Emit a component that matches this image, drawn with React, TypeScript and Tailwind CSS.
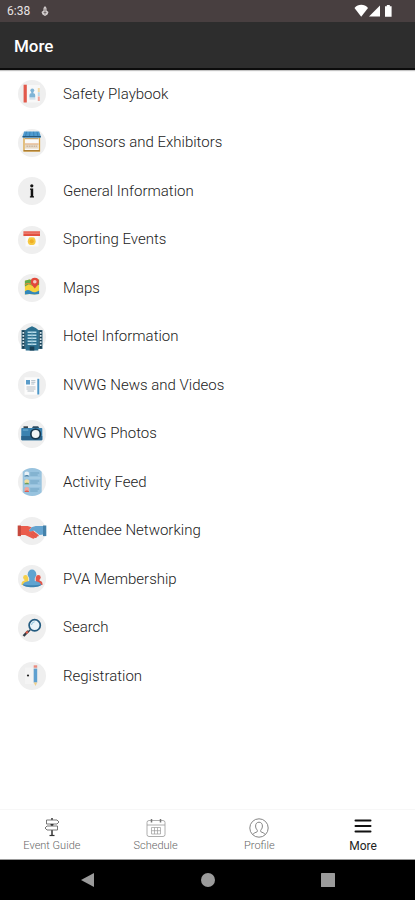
import React from 'react';

const menuItems = [
  { label: 'Safety Playbook', icon: <PlaybookIcon /> },
  { label: 'Sponsors and Exhibitors', icon: <StoreIcon /> },
  { label: 'General Information', icon: <InfoIcon /> },
  { label: 'Sporting Events', icon: <MedalIcon /> },
  { label: 'Maps', icon: <MapIcon /> },
  { label: 'Hotel Information', icon: <HotelIcon /> },
  { label: 'NVWG News and Videos', icon: <NewsIcon /> },
  { label: 'NVWG Photos', icon: <CameraIcon /> },
  { label: 'Activity Feed', icon: <FeedIcon /> },
  { label: 'Attendee Networking', icon: <HandshakeIcon /> },
  { label: 'PVA Membership', icon: <MembersIcon /> },
  { label: 'Search', icon: <MagnifierIcon /> },
  { label: 'Registration', icon: <PencilIcon /> },
];

const tabs = [
  { label: 'Event Guide', icon: <SignpostIcon />, active: false },
  { label: 'Schedule', icon: <CalendarIcon />, active: false },
  { label: 'Profile', icon: <ProfileIcon />, active: false },
  { label: 'More', icon: <BarsIcon />, active: true },
];

// Grey disc shared by all the menu icons
function Disc({ children }: { children: React.ReactNode }) {
  return (
    <svg viewBox="0 0 28 28" className="w-7 h-7 shrink-0 overflow-visible" aria-hidden="true">
      <circle cx="14" cy="14" r="14" fill="#efefef" />
      {children}
    </svg>
  );
}

function PlaybookIcon() {
  return (
    <Disc>
      <rect x="8" y="5" width="14" height="17.5" fill="#f8f8f8" />
      <rect x="5.6" y="4.7" width="3.2" height="17.8" fill="#e2594b" />
      <circle cx="14.3" cy="10.3" r="1.9" fill="#7fb4d6" />
      <path d="M13.2 11h2.2v2.5h-2.2z" fill="#7fb4d6" />
      <path d="M11.4 17.5v-2c0-1.6 1.2-2.4 2.9-2.4s2.9.8 2.9 2.4v2z" fill="#7fb4d6" />
      <path d="M11.4 18.9h6" stroke="#a9cbe0" strokeWidth="0.8" />
      <rect x="19.8" y="8" width="2" height="4" fill="#f3d9a6" />
      <rect x="19.8" y="12.2" width="2" height="4" fill="#bcd9e8" />
      <rect x="19.8" y="16.5" width="2" height="4.5" fill="#f0a79d" />
    </Disc>
  );
}

function StoreIcon() {
  return (
    <Disc>
      <rect x="6" y="7.5" width="15.5" height="14.5" fill="#fafafa" stroke="#d9a441" strokeWidth="1.3" />
      <path d="M6.2 2.6h15l1.6 4.6v1.6H4.6V7.2z" fill="#4f9bd0" />
      <path d="M4.6 7.6h18.2" stroke="#24597f" strokeWidth="1.2" />
      <path d="M8.5 2.8 7.6 7M12 2.8 11.6 7M15.6 2.8l.3 4.2M19 2.8l.9 4.2" stroke="#2f78ab" strokeWidth="0.7" />
      <path d="M7 9.7h13.5" stroke="#b98f4b" strokeWidth="1" />
      <rect x="7" y="15" width="13.6" height="4.6" fill="#e6d9c6" />
      <path d="M7 14.9h13.6" stroke="#e09a5f" strokeWidth="0.8" />
      <path d="M8.5 17.2h10.5" stroke="#b99c86" strokeWidth="0.8" strokeDasharray="1.6 0.8" />
      <path d="M5.6 21.7h16.2" stroke="#a5772b" strokeWidth="1.2" />
    </Disc>
  );
}

function InfoIcon() {
  return (
    <Disc>
      <circle cx="13.8" cy="8.8" r="1.6" fill="#111" />
      <path d="M12 11.6h3.200v7.700h.8v1.200h-4.100v-1.200h.8v-6.500H12z" fill="#111" />
    </Disc>
  );
}

function MedalIcon() {
  return (
    <Disc>
      <rect x="7.5" y="9" width="13" height="11.5" fill="#fafafa" />
      <rect x="5.4" y="5.2" width="16.6" height="2.6" fill="#ea6a5c" />
      <rect x="5.4" y="7.8" width="16.6" height="2.2" fill="#e2503f" />
      <path d="m11 11 2.700 1 2.700-1v3H11z" fill="#f9e3a0" />
      <circle cx="13.7" cy="15.2" r="3.9" fill="#f6c944" />
      <circle cx="13.7" cy="15.2" r="2" fill="#efae25" />
    </Disc>
  );
}

function MapIcon() {
  return (
    <Disc>
      <path d="m6.9 6.8 4.6-1.2 5 1.2 4.6-1.2v14.3l-4.6.7-5-.7-4.6.7z" fill="#f6d13c" />
      <path d="m6.9 6.8 4.6-1.2 5 1.2 4.6-1.2v5.2l-5 1.8-5.2-2.4-4 2.2z" fill="#61a94c" />
      <path d="M6.9 10.6c3-2 4.600-1.200 7 0" stroke="#e58b36" strokeWidth="1.1" fill="none" />
      <path d="M6.900 17.200c2.500-1.700 4-1.400 6.400.1 2.500 1.500 5 .9 7.800-.9v3.500l-4.600.7-5-.7-4.600.7z" fill="#3187bb" />
      <path d="M16.800 14.500c-1.500-2-4.100-4-4.100-6.700a4.100 4.100 0 0 1 8.200 0c0 2.700-2.600 4.700-4.100 6.700z" fill="#e3493b" />
      <circle cx="16.800" cy="7.800" r="1.800" fill="#f4c9c3" />
    </Disc>
  );
}

function HotelIcon() {
  return (
    <Disc>
      <rect x="3.500" y="7" width="21" height="19" fill="#3c6f86" />
      <path d="M5.300 7.500v18M22.700 7.500v18" stroke="#173f55" strokeWidth="2.200" />
      <path d="M5.300 9v15.500M22.700 9v15.500" stroke="#dbe9ee" strokeWidth="1.700" strokeDasharray="1.700 1.400" />
      <path d="M7.700 27.500V7l2.500-2 3.800-1.800L17.800 5l2.500 2v20.500z" fill="#2b6f8f" />
      <path d="M9.600 9.300h8.800M9.600 12.300h8.800M9.600 15.300h8.800M9.600 18.300h8.800M9.600 21.300h8.800" stroke="#b7dbe8" strokeWidth="1.500" />
      <path d="M14 8v14.500" stroke="#6ca6bd" strokeWidth="0.600" />
      <rect x="11.700" y="23.500" width="4.600" height="4" fill="#173f55" />
    </Disc>
  );
}

function NewsIcon() {
  return (
    <Disc>
      <rect x="6.500" y="6.300" width="15.500" height="17.400" fill="#fcfcfc" />
      <rect x="8" y="9" width="4" height="4.500" fill="#5b9cc9" />
      <path d="M13.200 9.600h4.200M13.200 11.300h4.200M13.200 13h3.200" stroke="#9fb1bd" strokeWidth="0.800" />
      <path d="M8.500 16h9M8.500 18h9M9.500 20h6.500" stroke="#aeb8bf" strokeWidth="0.900" />
      <rect x="19.300" y="7.800" width="2" height="15.700" fill="#4d97c8" />
    </Disc>
  );
}

function CameraIcon() {
  return (
    <Disc>
      <rect x="5.500" y="6.300" width="4.500" height="2" fill="#39434a" />
      <path d="M13.700 8.400 15 6.300h5.200l1.300 2.100z" fill="#2d4d63" />
      <rect x="3.300" y="8" width="21" height="12.300" rx="0.800" fill="#3b82b0" />
      <path d="M3.300 16h21v3.500a.8.800 0 0 1-.8.800H4.100a.8.800 0 0 1-.8-.8z" fill="#2a648d" />
      <path d="M4.800 10h5.500" stroke="#6fadd2" strokeWidth="1.200" />
      <circle cx="17.600" cy="14" r="5.600" fill="#16364c" />
      <circle cx="17.600" cy="14" r="3.900" fill="#f1f5f7" />
    </Disc>
  );
}

function FeedIcon() {
  return (
    <Disc>
      <path d="M4.700 3.800A14 14 0 0 1 23.700 3.800V24.200A14 14 0 0 1 4.700 24.200z" fill="#98c3df" />
      <path d="M12.200 5h9M12.200 7h7.500M12.200 13h9M12.200 15h7.500M12.200 21h9M12.200 23h7.500" stroke="#6c9fc0" strokeWidth="0.900" />
      <path d="M6 10h16.500M6 18h16.500" stroke="#b9d8ea" strokeWidth="0.800" />
      <circle cx="8.800" cy="6" r="2.400" fill="#e8f1f6" />
      <path d="M6.500 8.600c0-2 4.600-2 4.600 0z" fill="#5384a5" />
      <circle cx="8.800" cy="13.600" r="2.400" fill="#f0dda0" />
      <path d="M6.500 16.200c0-2 4.600-2 4.600 0z" fill="#6b9d57" />
      <circle cx="8.800" cy="21.500" r="2.400" fill="#efa79e" />
      <path d="M6.500 24.100c0-2 4.600-2 4.600 0z" fill="#db5e51" />
    </Disc>
  );
}

function HandshakeIcon() {
  return (
    <Disc>
      <path d="M25.500 9h-7.800l-4.200 1.200-3 3.600 2.300 1.200 3.200-1.400 5.500 4.400 4-.5z" fill="#64a3cf" />
      <path d="M2.500 9h7.200l3.800 1.300-2.600 3c.4 1.700 2.500 1.500 4.200.5l5.500 4.200c.4 1.200-.5 1.900-1.600 1.500.1 1.300-1.200 1.900-2.300 1.300-.5 1-1.700 1.200-2.700.4L7.200 18H2.500z" fill="#ea5c4c" />
      <path d="m13 16.500 4 3.200M15 15.300l3.700 3" stroke="#d94f40" strokeWidth="0.500" />
      <rect x="-0.300" y="8.500" width="3.300" height="10.600" fill="#c6493d" />
      <rect x="25" y="8.500" width="3.300" height="10.600" fill="#4381aa" />
    </Disc>
  );
}

function MembersIcon() {
  return (
    <Disc>
      <circle cx="7.500" cy="12.500" r="2.400" fill="#f5d04a" />
      <path d="M3.500 19c0-2.400 1.500-3 3-3.500v-3h3.800V20H3.500z" fill="#f5d04a" />
      <circle cx="20.300" cy="12.500" r="2.400" fill="#e2574a" />
      <path d="M24.500 19c0-2.400-1.500-3-3-3.500v-3h-3.800V20h6.800z" fill="#e2574a" />
      <ellipse cx="14" cy="9.300" rx="4.300" ry="4.700" fill="#5fa3d0" />
      <path d="M11.200 11h5.600v5c3 .6 6.200 1.600 6.200 4-2.500 2.600-15.500 2.600-18 0 0-2.400 3.200-3.400 6.200-4z" fill="#5fa3d0" />
      <path d="M4.500 19.200c4 1.300 15 1.300 19 0-.5 3.900-18.500 3.900-19 0z" fill="#3f83b1" />
    </Disc>
  );
}

function MagnifierIcon() {
  return (
    <Disc>
      <path d="m12.300 15.700-2.500 2.500" stroke="#34495a" strokeWidth="1.500" />
      <path d="m10.300 17-4.800 5" stroke="#333e48" strokeWidth="2.500" />
      <path d="m9.800 17.500-1.700 1.800" stroke="#e0604f" strokeWidth="2.300" />
      <circle cx="16.700" cy="11.300" r="5.600" fill="#e9f4fa" stroke="#235b80" strokeWidth="1.700" />
      <path d="M13.500 11a3.500 3.500 0 0 1 3.200-3.200" stroke="#8bc3df" strokeWidth="1" fill="none" />
    </Disc>
  );
}

function PencilIcon() {
  return (
    <Disc>
      <rect x="7" y="5.500" width="8" height="16.500" fill="#f4f4f4" />
      <circle cx="10" cy="13.500" r="1.100" fill="#222" />
      <rect x="15.700" y="3.300" width="3.500" height="2.500" fill="#ea8a7e" />
      <rect x="15.700" y="5.800" width="3.500" height="1.200" fill="#bccbd5" />
      <rect x="15.700" y="7" width="3.500" height="13.500" fill="#5ea0d0" />
      <path d="M15.700 20.500h3.500l-1.700 3.600z" fill="#efcf8a" />
    </Disc>
  );
}

function SignpostIcon() {
  return (
    <svg viewBox="0 0 20 20" className="w-5 h-5" fill="none" stroke="#666" aria-hidden="true">
      <path d="M10 0v2M10 6v2M10 12v5.500" stroke="#333" strokeWidth="1.500" />
      <path d="M7.500 17.500h5" stroke="#333" strokeWidth="1.200" />
      <path d="M4.500 2h10.500l2 2-2 2H4.500z" strokeWidth="0.900" />
      <path d="M15.500 8H5L3 10l2 2h10.500z" strokeWidth="0.900" />
      <path d="M8.500 6.700h3" stroke="#333" strokeWidth="1.200" />
    </svg>
  );
}

function CalendarIcon() {
  return (
    <svg viewBox="0 0 20 20" className="w-5 h-5" fill="none" stroke="#999" strokeWidth="0.800" aria-hidden="true">
      <rect x="1" y="2.500" width="18" height="16" rx="2" />
      <path d="M1 7h18" />
      <path d="M5.500 1v3.500M14.500 1v3.500" stroke="#777" strokeWidth="1.500" />
      <path d="M5.500 9.500h9v6.500h-9zM8.500 9.500V16M11.500 9.500V16M5.500 12.700h9" strokeWidth="0.700" />
    </svg>
  );
}

function ProfileIcon() {
  return (
    <svg viewBox="0 0 20 20" className="w-5 h-5" fill="none" stroke="#777" strokeWidth="0.900" aria-hidden="true">
      <circle cx="10" cy="10" r="9.200" />
      <path d="M3.800 16.600c.6-1.600 3-2.100 4.300-2.800.5-.4.400-1.500-.1-2-1-1-1.400-2.400-1.400-3.800C6.600 5.600 8 4.200 10 4.200s3.400 1.400 3.400 3.800c0 1.400-.4 2.800-1.400 3.800-.5.500-.6 1.600-.1 2 1.300.7 3.700 1.200 4.300 2.800" />
    </svg>
  );
}

function BarsIcon() {
  return (
    <svg viewBox="0 0 20 20" className="w-5 h-5" stroke="#111" strokeWidth="2" strokeLinecap="round" aria-hidden="true">
      <path d="M2.500 2.500h15M2.500 8h15M2.500 13.500h15" />
    </svg>
  );
}

function StatusBar() {
  return (
    <div className="flex items-center h-[22px] px-[7px] bg-[#483f40] text-[#e8e4e4]">
      <span className="text-xs">6:38</span>
      <svg viewBox="0 0 10 12" className="w-2.5 h-3 ml-2.5" fill="#d5d0d0" aria-hidden="true">
        <path d="M5 1 6.500 3v2.500L8.500 7 7.500 9.500 5 11 2.500 9.500 1.500 7l2-1.500V3z" />
        <path d="M5 3.500v6M3.500 7.500h3" stroke="#6a6061" strokeWidth="0.800" />
      </svg>
      <svg viewBox="0 0 40 14" className="w-10 h-3.5 ml-auto mr-3.5" fill="#fff" aria-hidden="true">
        <path d="M.5 4C4-.2 10.500-.2 14 4L7.200 12.800z" />
        <path d="M26 1.500v11H15z" />
        <path d="M31 2.300h1.800V1h3v1.300h1.800v10.400H31z" />
      </svg>
    </div>
  );
}

export default function App() {
  return (
    <div className="min-h-screen flex flex-col bg-white font-['Roboto',sans-serif]">
      <StatusBar />
      <header className="flex items-center h-12 px-3.5 pt-1 bg-[#2d2d2d] border-b-2 border-[#0c0c0c] shadow-[0_1px_1px_#c4c4c4]">
        <h1 className="text-[17px] font-medium text-white">More</h1>
      </header>

      <main className="flex-1">
        <ul>
          {menuItems.map((item) => (
            <li key={item.label} className="odd:h-12 even:h-[49px]">
              <a href="#" className="flex items-center gap-[17px] h-full pl-[18px] text-[15px] font-light text-[#222]">
                {item.icon}
                <span>{item.label}</span>
              </a>
            </li>
          ))}
        </ul>
      </main>

      {/* Tab bar */}
      <nav className="grid grid-cols-4 h-[51px] border-t border-[#f7f7f7] border-b border-b-[#999]">
        {tabs.map((tab) => (
          <button
            key={tab.label}
            className={`flex flex-col items-center pt-2 cursor-pointer ${
              tab.active ? 'text-xs leading-4 text-[#222]' : 'text-[11px] leading-4 font-light text-[#666]'
            }`}
          >
            {tab.icon}
            <span>{tab.label}</span>
          </button>
        ))}
      </nav>

      {/* Android system buttons */}
      <div className="flex items-center justify-center gap-[106px] h-10 bg-black">
        <button aria-label="Back">
          <svg viewBox="0 0 14 14" className="w-3.5 h-3.5" fill="#9b9b9b"><path d="M13 0v14L0 7z" /></svg>
        </button>
        <button aria-label="Home">
          <svg viewBox="0 0 14 14" className="w-3.5 h-3.5" fill="#9b9b9b"><circle cx="7" cy="7" r="7" /></svg>
        </button>
        <button aria-label="Overview">
          <svg viewBox="0 0 14 14" className="w-3.5 h-3.5" fill="#9b9b9b"><rect width="14" height="14" rx="0.500" /></svg>
        </button>
      </div>
    </div>
  );
}
